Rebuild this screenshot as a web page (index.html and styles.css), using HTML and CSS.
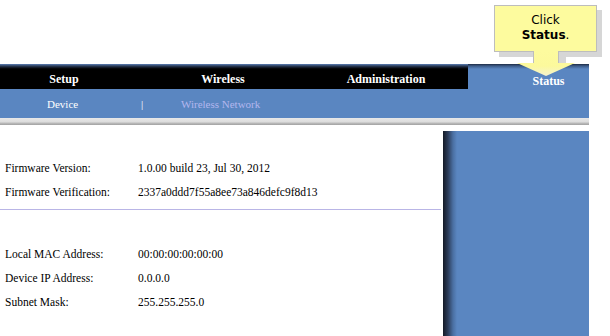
FILE: index.html
```html
<!DOCTYPE html>
<html lang="en">
  <head>
    <meta charset="UTF-8" />
    <title>Status</title>
    <link rel="stylesheet" href="styles.css">
  </head>
  <body>
    <div class="page">
      <div class="top"></div>

      <!-- main tabs -->
      <div class="nav">
        <div class="tab tab-setup">Setup</div>
        <div class="tab tab-wireless">Wireless</div>
        <div class="tab tab-admin">Administration</div>
        <div class="tab tab-status">Status</div>
      </div>

      <!-- sub tabs -->
      <div class="subnav">
        <span class="sub sub-device">Device</span>
        <span class="sub sub-sep">|</span>
        <span class="sub sub-wireless">Wireless Network</span>
      </div>
      <div class="graybar"></div>

      <div class="main">
        <div class="content">
          <div class="row"><span class="label">Firmware Version:</span><span class="value">1.0.00 build 23, Jul 30, 2012</span></div>
          <div class="row"><span class="label">Firmware Verification:</span><span class="value">2337a0ddd7f55a8ee73a846defc9f8d13</span></div>
          <div class="divider"></div>
          <div class="row"><span class="label">Local MAC Address:</span><span class="value">00:00:00:00:00:00</span></div>
          <div class="row"><span class="label">Device IP Address:</span><span class="value">0.0.0.0</span></div>
          <div class="row"><span class="label">Subnet Mask:</span><span class="value">255.255.255.0</span></div>
        </div>
        <div class="panel"></div>
      </div>

      <!-- callout pointing at the Status tab -->
      <div class="callout-box">
        <div>Click</div>
        <div><b>Status</b>.</div>
      </div>
      <svg class="callout-arrow" width="70" height="32" viewBox="0 0 70 32">
        <defs>
          <linearGradient id="tip" x1="0" y1="0" x2="0" y2="1">
            <stop offset="0" stop-color="#fdfb9e" />
            <stop offset="0.6" stop-color="#fcf99c" />
            <stop offset="1" stop-color="#f6f3cf" />
          </linearGradient>
        </defs>
        <polygon points="45,6 52,6 52,12 45,12" fill="#d6d6d6" />
        <polygon points="19,0 45,0 45,12 61,12 32,25 3,12 19,12" fill="url(#tip)" />
        <line x1="19.5" y1="0" x2="19.5" y2="12" stroke="#bdbdbd" />
        <line x1="44.5" y1="0" x2="44.5" y2="12" stroke="#bdbdbd" />
      </svg>
    </div>
  </body>
</html>
```

FILE: styles.css
```css
body {
  margin: 0;
  background: #fff;
  font-family: "Liberation Serif", "Times New Roman", serif;
}
.page {
  position: relative;
  width: 610px;
  height: 336px;
  overflow: hidden;
}
.top {
  height: 64px;
}

/* main tabs */
.nav {
  display: flex;
  width: 589px;
  height: 25px;
}
.tab {
  color: #fff;
  font-weight: bold;
  font-size: 12px;
  text-align: center;
  background: linear-gradient(#5b7fb6 0, #2c3d59 2px, #0c1018 4px, #000 5px);
  line-height: 30px;
}
.tab-setup {
  width: 128px;
}
.tab-wireless {
  width: 190px;
}
.tab-admin {
  width: 150px;
  padding-right: 14px;
  box-sizing: border-box;
}
.tab-status {
  flex: 1;
  padding-left: 40px;
  background: linear-gradient(#1e2c44 0, #3d5b88 2px, #5a86c1 5px);
  line-height: 34px;
}

/* sub tabs */
.subnav {
  width: 589px;
  height: 29px;
  background: #5a86c1;
  position: relative;
  font-size: 11px;
}
.sub {
  position: absolute;
  top: 9px;
}
.sub-device {
  left: 47px;
  color: #fff;
}
.sub-sep {
  left: 141px;
  color: #fff;
}
.sub-wireless {
  left: 181px;
  color: #b3b6ee;
}
.graybar {
  width: 589px;
  height: 7px;
  background: linear-gradient(#e8e8e8 0, #dcdcdc 4px, #bdbdbd 5px, #a2a2a2 7px);
}

/* content */
.main {
  display: flex;
  width: 589px;
}
.content {
  width: 443px;
  padding-top: 31px;
  font-size: 11.5px;
  color: #000;
}
.row {
  display: flex;
  height: 24px;
  align-items: center;
}
.label {
  width: 133px;
  padding-left: 5px;
}
.divider {
  width: 441px;
  height: 1px;
  background: #b9b5e6;
  margin: 5px 0 32px;
}
.panel {
  flex: 1;
  margin-top: 6px;
  height: 220px;
  background: linear-gradient(to right, #141a26 0, #2c3d5a 5px, #4a6fa2 10px, #5a86c1 14px);
}

/* callout */
.callout-box {
  position: absolute;
  left: 494px;
  top: 5px;
  width: 103px;
  height: 47px;
  box-sizing: border-box;
  border: 1px solid #bdbdbd;
  background: #fdfb9e;
  box-shadow: 5px 5px 0 #d6d6d6;
  font-family: "DejaVu Sans", Verdana, sans-serif;
  font-size: 12px;
  text-align: center;
  padding-top: 7px;
  line-height: 15px;
  color: #000;
}
.callout-arrow {
  position: absolute;
  left: 514px;
  top: 51px;
}
```
